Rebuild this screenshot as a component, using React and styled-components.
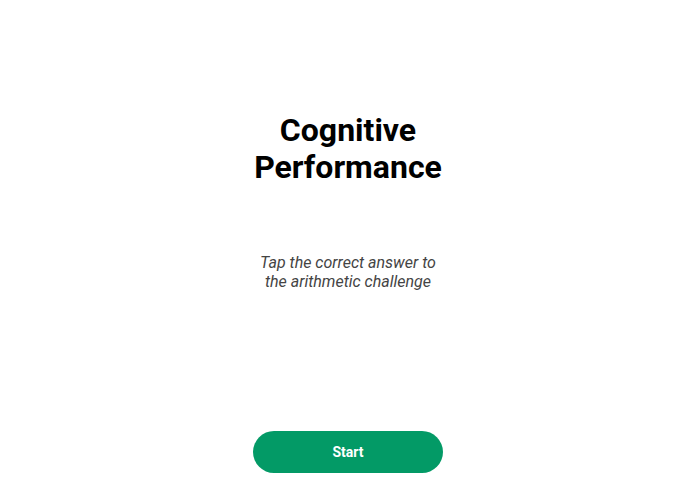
import React from "react";
import styled, { createGlobalStyle } from "styled-components";

const Global = createGlobalStyle`
  html, body { margin: 0; padding: 0; background: #fff; }
  body { font-family: Roboto, "Noto Sans", sans-serif; }
  * { box-sizing: border-box; }
`;

const Page = styled.div`
  height: 494px;
  display: flex;
  flex-direction: column;
  align-items: center;
  padding: 112px 0 21px;
`;

const Column = styled.div`
  width: 190px;
  display: flex;
  flex-direction: column;
  align-items: center;
  flex: 1;
  margin-left: 1px;
`;

const Title = styled.h1`
  margin: 0;
  font-size: 32px;
  line-height: 37px;
  font-weight: 700;
  color: #000;
  text-align: center;
`;

const Subtitle = styled.p`
  margin: 67px 0 0;
  font-size: 16px;
  line-height: 19px;
  font-style: italic;
  color: #444;
  text-align: center;
`;

const StartButton = styled.button`
  margin-top: auto;
  width: 190px;
  height: 42px;
  border: none;
  border-radius: 21px;
  background: #039a66;
  color: #fff;
  font-family: Roboto, sans-serif;
  font-weight: 700;
  font-size: 14px;
`;

export default function App() {
  return (
    <>
      <Global />
      <Page>
        <Column>
          <Title>Cognitive Performance</Title>
          <Subtitle>Tap the correct answer to the arithmetic challenge</Subtitle>
          <StartButton>Start</StartButton>
        </Column>
      </Page>
    </>
  );
}
